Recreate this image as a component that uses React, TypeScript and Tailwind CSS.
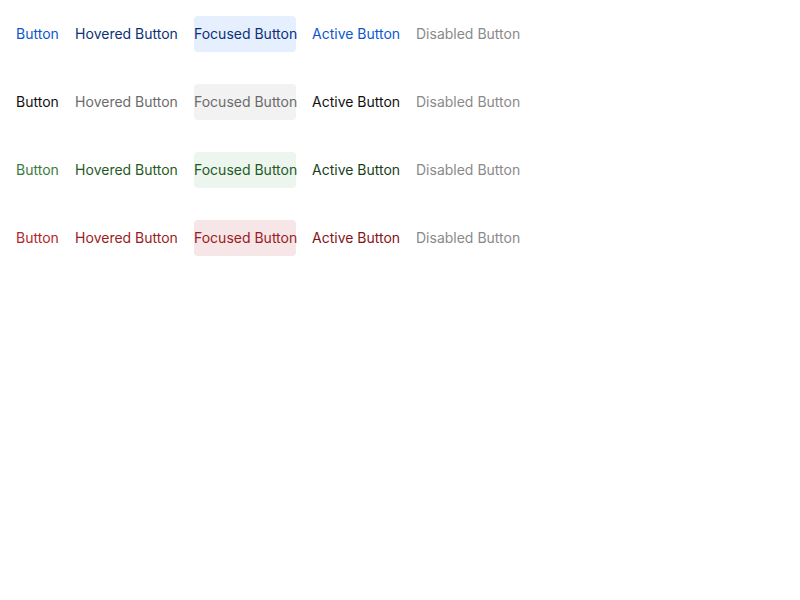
const rows = [
  {
    base: 'text-[#0b57d0]',
    hover: 'text-[#0a3178]',
    focus: 'text-[#0a3178] bg-[#e6effd]',
    active: 'text-[#0b57d0]',
  },
  {
    base: 'text-[#111111]',
    hover: 'text-[#6b6b6b]',
    focus: 'text-[#6b6b6b] bg-[#f2f2f2]',
    active: 'text-[#111111]',
  },
  {
    base: 'text-[#3a7a3e]',
    hover: 'text-[#1f5a24]',
    focus: 'text-[#1f5a24] bg-[#ecf5ee]',
    active: 'text-[#173f1b]',
  },
  {
    base: 'text-[#b3262d]',
    hover: 'text-[#9a1b22]',
    focus: 'text-[#9a1b22] bg-[#f6e6e7]',
    active: 'text-[#851219]',
  },
];

export default function App() {
  return (
    <div className="min-h-screen bg-white p-4 flex flex-col gap-8 [font-family:Inter,sans-serif] text-sm">
      {rows.map((r, i) => (
        <div key={i} className="flex items-center gap-4 h-9">
          <button className={`h-9 w-[43px] whitespace-nowrap ${r.base}`}>Button</button>
          <button className={`h-9 w-[103px] whitespace-nowrap ${r.hover}`}>Hovered Button</button>
          <button className={`h-9 w-[102px] whitespace-nowrap rounded ${r.focus}`}>Focused Button</button>
          <button className={`h-9 w-[88px] whitespace-nowrap ${r.active}`}>Active Button</button>
          <button className="h-9 whitespace-nowrap text-[#8a8a8a]" disabled>
            Disabled Button
          </button>
        </div>
      ))}
    </div>
  );
}
